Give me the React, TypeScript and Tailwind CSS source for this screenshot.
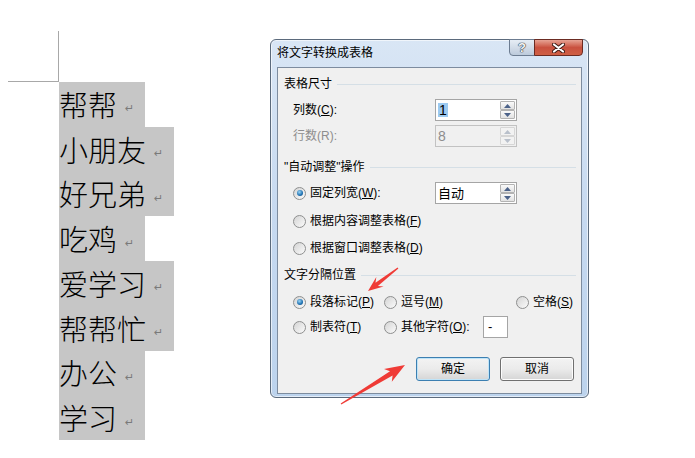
import type { ReactNode } from 'react'

const lines = ['帮帮', '小朋友', '好兄弟', '吃鸡', '爱学习', '帮帮忙', '办公', '学习']

const ui = { fontFamily: '"Liberation Sans", "Noto Sans CJK SC", sans-serif' }
const cjk = { fontFamily: '"Noto Sans CJK SC", "Liberation Sans", sans-serif' }

/** tapered annotation arrow, tail -> tip */
function arrowPoints(x1: number, y1: number, x2: number, y2: number, headLen: number, headW: number, shaftW: number) {
  const dx = x2 - x1
  const dy = y2 - y1
  const len = Math.hypot(dx, dy)
  const ux = dx / len
  const uy = dy / len
  const nx = -uy
  const ny = ux
  const bx = x2 - ux * headLen
  const by = y2 - uy * headLen
  const pts = [
    [x1 + nx * 0.6, y1 + ny * 0.6],
    [bx + ux * 2 + nx * (shaftW / 2), by + uy * 2 + ny * (shaftW / 2)],
    [bx - ux * 2 + nx * (headW / 2), by - uy * 2 + ny * (headW / 2)],
    [x2, y2],
    [bx - ux * 2 - nx * (headW / 2), by - uy * 2 - ny * (headW / 2)],
    [bx + ux * 2 - nx * (shaftW / 2), by + uy * 2 - ny * (shaftW / 2)],
    [x1 - nx * 0.6, y1 - ny * 0.6],
  ]
  return pts.map(([x, y]) => `${x.toFixed(1)},${y.toFixed(1)}`).join(' ')
}

function Radio({ checked }: { checked?: boolean }) {
  return (
    <span className="grid h-[13px] w-[13px] shrink-0 place-items-center rounded-full border border-[#8e8f8f] bg-gradient-to-br from-[#d4d4d4] to-[#fbfbfb]">
      {checked && (
        <span className="h-[6px] w-[6px] rounded-full bg-[radial-gradient(circle_at_40%_35%,#9ad6f7,#1f70b0_60%,#0e4c84)]" />
      )}
    </span>
  )
}

function Option({ checked, children, width }: { checked?: boolean; children: ReactNode; width?: string }) {
  return (
    <div className={`flex items-center ${width ?? ''}`}>
      <Radio checked={checked} />
      <span className="ml-[4px] whitespace-nowrap">{children}</span>
    </div>
  )
}

function Tri({ up, disabled }: { up?: boolean; disabled?: boolean }) {
  return (
    <svg width="7" height="4" viewBox="0 0 7 4">
      <polygon points={up ? '0,4 7,4 3.5,0' : '0,0 7,0 3.5,4'} fill={disabled ? '#b9c0cb' : '#4c6289'} />
    </svg>
  )
}

function SpinBox({ children, disabled }: { children: ReactNode; disabled?: boolean }) {
  return (
    <div
      className={`flex h-[22px] w-[82px] border ${
        disabled ? 'border-[#c2c2c2] bg-[#f0f0f0] text-[#8d8d8d]' : 'border-[#a5a5a5] bg-white text-black'
      }`}
    >
      <div className="flex flex-1 items-center pl-[2px] text-[13px]">{children}</div>
      <div className="flex w-[16px] flex-col py-[1px] pr-[1px]">
        {[true, false].map((up) => (
          <div
            key={String(up)}
            className={`grid flex-1 place-items-center rounded-[1px] border ${
              disabled ? 'border-[#d6d6d6] bg-[#f2f2f2]' : 'border-[#b3b3b3] bg-gradient-to-b from-[#fafafa] to-[#e2e2e2]'
            }`}
          >
            <Tri up={up} disabled={disabled} />
          </div>
        ))}
      </div>
    </div>
  )
}

function Header({ title, className }: { title: string; className: string }) {
  return (
    <div className={`flex h-[20px] items-center ${className}`}>
      <span className="whitespace-nowrap">{title}</span>
      <span className="ml-[5px] h-px flex-1 bg-[#d5dfe6]" />
    </div>
  )
}

function Button({ children, primary }: { children: ReactNode; primary?: boolean }) {
  return (
    <div
      className={`grid h-[24px] w-[74px] place-items-center rounded-[3px] border bg-gradient-to-b from-[#f3f3f3] via-[#ebebeb] to-[#d5d5d5] ${
        primary ? 'border-[#3c7fb1] shadow-[inset_0_0_0_1px_#bfe4f8]' : 'border-[#707070] shadow-[inset_0_0_0_1px_#fcfcfc]'
      }`}
    >
      {children}
    </div>
  )
}

function Dialog() {
  return (
    <div
      className="mt-[39px] flex h-[359px] w-[319px] flex-col rounded-[6px] border border-[#5b6a7c] bg-gradient-to-b from-[#d9e6f5] via-[#c6d9f0] to-[#bcd3ed] text-[12px] text-black shadow-[inset_0_0_0_1px_rgba(255,255,255,0.6)]"
      style={ui}
    >
      <div className="flex h-[27px] shrink-0 items-start">
        <span className="ml-[6px] mt-[5px] leading-[16px]">将文字转换成表格</span>
        <div className="-mt-px ml-auto mr-[5px] flex">
          <div className="grid h-[17px] w-[26px] place-items-center rounded-bl-[4px] border border-[#6c7c91] bg-gradient-to-b from-[#e6edf5] via-[#d2dce8] to-[#bccadb] text-[13px] font-bold leading-none text-[#f6f6f6] [text-shadow:0_0_1px_#2c3440,0_0_1px_#2c3440,0_0_1px_#2c3440]">
            ?
          </div>
          <div className="-ml-px grid h-[17px] w-[49px] place-items-center rounded-br-[4px] border border-[#6b2b22] bg-gradient-to-b from-[#e6a394] via-[#c9513f] to-[#cf5f44]">
            <svg width="13" height="10" viewBox="0 0 13 10">
              <path d="M2 1.5 L11 8.5 M11 1.5 L2 8.5" stroke="#3d1a14" strokeWidth="4" strokeLinecap="round" />
              <path d="M2 1.5 L11 8.5 M11 1.5 L2 8.5" stroke="#ffffff" strokeWidth="2.2" strokeLinecap="round" />
            </svg>
          </div>
        </div>
      </div>

      <div className="mx-[6px] mb-[3px] flex flex-1 flex-col border border-[#7d8c9f] bg-[#f0f0f0] pl-[6px] pr-[5px] pt-[6px]">
        <Header title="表格尺寸" className="" />
        <div className="mt-[5px] flex h-[22px] items-center pl-[9px]">
          <span className="w-[142px]">
            列数(<u>C</u>):
          </span>
          <SpinBox>
            <span className="bg-[#9ccaf1] px-[1px] text-[14px] leading-[14px]">1</span>
          </SpinBox>
        </div>
        <div className="mt-[4px] flex h-[22px] items-center pl-[9px]">
          <span className="w-[142px] text-[#8d8d8d]">行数(R):</span>
          <SpinBox disabled>
            <span className="text-[14px]">8</span>
          </SpinBox>
        </div>

        <Header title={'"自动调整"操作'} className="mt-[10px]" />
        <div className="mt-[5px] flex h-[22px] items-center pl-[9px]">
          <Option checked width="w-[142px]">
            固定列宽(<u>W</u>):
          </Option>
          <SpinBox>
            <span style={cjk}>自动</span>
          </SpinBox>
        </div>
        <div className="mt-[6px] flex h-[22px] items-center pl-[9px]">
          <Option>
            根据内容调整表格(<u>F</u>)
          </Option>
        </div>
        <div className="mt-[5px] flex h-[22px] items-center pl-[9px]">
          <Option>
            根据窗口调整表格(<u>D</u>)
          </Option>
        </div>

        <Header title="文字分隔位置" className="mt-[6px]" />
        <div className="mt-[6px] flex h-[22px] items-center pl-[9px]">
          <Option checked width="w-[91px]">
            段落标记(<u>P</u>)
          </Option>
          <Option width="w-[132px]">
            逗号(<u>M</u>)
          </Option>
          <Option>
            空格(<u>S</u>)
          </Option>
        </div>
        <div className="mt-[3px] flex h-[22px] items-center pl-[9px]">
          <Option width="w-[91px]">
            制表符(<u>T</u>)
          </Option>
          <div className="flex items-center">
            <Radio />
            <span className="ml-[4px] w-[82px] whitespace-nowrap">
              其他字符(<u>O</u>):
            </span>
            <div className="flex h-[22px] w-[25px] items-center border border-[#a5a5a5] bg-white pl-[4px] text-[13px]">-</div>
          </div>
        </div>

        <div className="mt-[19px] flex justify-end gap-[10px] pr-[2px]">
          <Button primary>确定</Button>
          <Button>取消</Button>
        </div>
      </div>
    </div>
  )
}

export default function App() {
  return (
    <div className="relative flex h-[458px] w-[695px] overflow-hidden bg-white">
      <div className="w-[270px] shrink-0">
        <div className="ml-[8px] mt-[31px] h-[51px] w-[51px] border-b border-r border-[#a8a8a8]" />
        <div className="ml-[59px] flex flex-col items-start" style={cjk}>
          {lines.map((t) => (
            <div key={t} className="flex h-[44.75px] items-center bg-[#c6c6c6]">
              <span className="text-[29px] font-light leading-none text-black">{t}</span>
              <span
                className="mt-[9px] w-[28px] pl-[8px] text-[11px] leading-none text-[#7a7a7a]"
                style={{ fontFamily: '"DejaVu Sans", sans-serif' }}
              >
                ↵
              </span>
            </div>
          ))}
        </div>
      </div>

      <Dialog />

      <svg className="pointer-events-none absolute inset-0" width="695" height="458" viewBox="0 0 695 458">
        <polygon points={arrowPoints(398, 268, 368, 291, 13, 12, 4)} fill="#ef3b36" />
        <polygon points={arrowPoints(341, 404, 405, 365, 18, 15, 5)} fill="#ef3b36" />
      </svg>
    </div>
  )
}
